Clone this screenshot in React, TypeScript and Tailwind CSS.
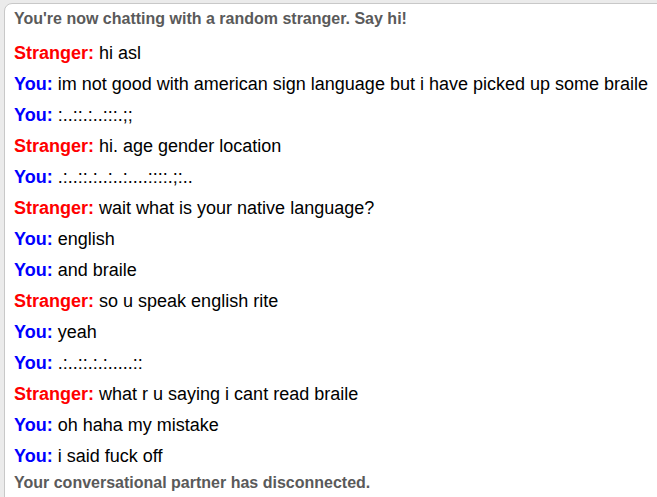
const log: { who: 'Stranger' | 'You'; text: string }[] = [
  { who: 'Stranger', text: 'hi asl' },
  { who: 'You', text: 'im not good with american sign language but i have picked up some braile' },
  { who: 'You', text: ':..::.:..:::.;;' },
  { who: 'Stranger', text: 'hi. age gender location' },
  { who: 'You', text: '.:..::.:..:..:....::::.;:..' },
  { who: 'Stranger', text: 'wait what is your native language?' },
  { who: 'You', text: 'english' },
  { who: 'You', text: 'and braile' },
  { who: 'Stranger', text: 'so u speak english rite' },
  { who: 'You', text: 'yeah' },
  { who: 'You', text: '.:..::.:.:.....::' },
  { who: 'Stranger', text: 'what r u saying i cant read braile' },
  { who: 'You', text: 'oh haha my mistake' },
  { who: 'You', text: 'i said fuck off' },
];

export default function App() {
  return (
    <div className="w-[657px] h-[497px] overflow-hidden bg-[#ebebeb] pl-[4px] pt-[3px] font-['Liberation_Sans',Arial,sans-serif]">
      <div className="w-[700px] h-[520px] bg-white border border-[#c8c8c8] rounded-tl-[8px] pl-[9px] pt-[6px]">
        {/* status line */}
        <p className="text-[16px] leading-[18px] font-bold text-[#5a5a5a] mb-[10px] whitespace-nowrap">
          You're now chatting with a random stranger. Say hi!
        </p>

        {log.map((m, i) => (
          <p key={i} className="text-[18px] leading-[21px] py-[5px] text-black whitespace-nowrap">
            <strong className={m.who === 'Stranger' ? 'text-[#ff0000]' : 'text-[#0000ff]'}>
              {m.who}:
            </strong>{' '}
            {m.text}
          </p>
        ))}

        <p className="text-[16px] leading-[18px] font-bold text-[#5a5a5a] mt-[2px] whitespace-nowrap">
          Your conversational partner has disconnected.
        </p>
      </div>
    </div>
  );
}
